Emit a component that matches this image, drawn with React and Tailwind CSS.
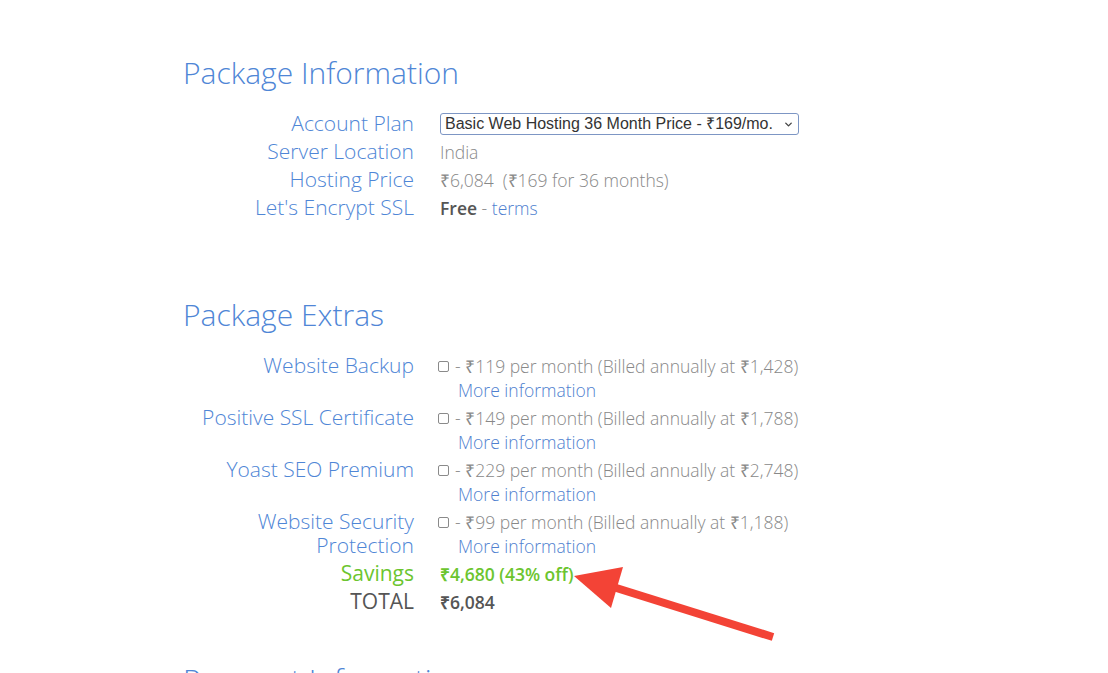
import { ChevronDown } from "lucide-react";

const extras = [
    { name: "Website Backup", monthly: "₹119", yearly: "₹1,428" },
    { name: "Positive SSL Certificate", monthly: "₹149", yearly: "₹1,788" },
    { name: "Yoast SEO Premium", monthly: "₹229", yearly: "₹2,748" },
    { name: "Website Security Protection", monthly: "₹99", yearly: "₹1,188" },
];

// label on the left (right aligned), value column on the right
const Row = ({ label, labelClass = "font-light text-[#4f86d6]", children }) => (
    <div className="flex items-start gap-[26px] py-[2px]">
        <div className={`w-[231px] shrink-0 text-right text-[21px] leading-6 ${labelClass}`}>{label}</div>
        <div className="flex-1 mt-[1px] -mb-[1px] text-[17.5px] leading-6">{children}</div>
    </div>
);

const Heading = ({ children, className = "" }) => (
    <h2 className={`text-[30px] leading-[36px] font-light text-[#4f86d6] ${className}`}>{children}</h2>
);

const App = () => {
    return (
        <div className="relative min-h-[673px] bg-white overflow-hidden font-['Open_Sans',sans-serif]">
            <div className="w-[742px] mx-auto pt-[55px]">
                {/* Package Information */}
                <Heading>Package Information</Heading>
                <div className="mt-[18px]">
                    <Row label="Account Plan">
                        <div className="flex">
                            <div className="flex items-center h-[22px] mt-[1px] pl-[4px] pr-[4px] border border-[#7d96c4] rounded-[3px] text-[16px] text-[#333] font-['Liberation_Sans',Arial,sans-serif] leading-none">
                                Basic Web Hosting 36 Month Price - ₹169/mo.
                                <ChevronDown size={11} strokeWidth={3} className="ml-[10px] text-[#444]" />
                            </div>
                        </div>
                    </Row>
                    <Row label="Server Location">
                        <span className="font-light text-[#888]">India</span>
                    </Row>
                    <Row label="Hosting Price">
                        <span className="font-light text-[#888] whitespace-pre">₹6,084  (₹169 for 36 months)</span>
                    </Row>
                    <Row label="Let's Encrypt SSL">
                        <span className="font-semibold text-[#555]">Free</span>
                        <span className="font-light text-[#888]"> - </span>
                        <a className="font-light text-[#4f7fcf]">terms</a>
                    </Row>
                </div>

                {/* Package Extras */}
                <Heading className="mt-[76px]">Package Extras</Heading>
                <div className="mt-[18px]">
                    {extras.map((item) => (
                        <Row key={item.name} label={item.name}>
                            <div className="flex items-center font-light text-[#888]">
                                <span className="inline-block w-[11px] h-[11px] ml-[-2px] mr-[6px] border border-[#8a8a8a] rounded-[2px]"></span>
                                <span>- {item.monthly} per month (Billed annually at {item.yearly})</span>
                            </div>
                            <a className="block pl-[18px] font-light text-[#4f7fcf]">More information</a>
                        </Row>
                    ))}
                    <Row label="Savings" labelClass="font-normal text-[#6cc52f]">
                        <span className="font-semibold text-[#6cc52f]">₹4,680 (43% off)</span>
                    </Row>
                    <Row label="TOTAL" labelClass="font-normal text-[#555]">
                        <span className="font-semibold text-[#555]">₹6,084</span>
                    </Row>
                </div>

                {/* Payment Information */}
                <Heading className="mt-[47px]">Payment Information</Heading>
                <div className="h-[200px]"></div>
            </div>

            {/* callout arrow */}
            <svg className="absolute left-0 top-0 pointer-events-none" width="1108" height="673" viewBox="0 0 1108 673">
                <line x1="610" y1="586" x2="773" y2="637" stroke="#f34336" strokeWidth="8" />
                <polygon points="574,576 623,567 611,608" fill="#f34336" />
            </svg>
        </div>
    );
};

export default App;
